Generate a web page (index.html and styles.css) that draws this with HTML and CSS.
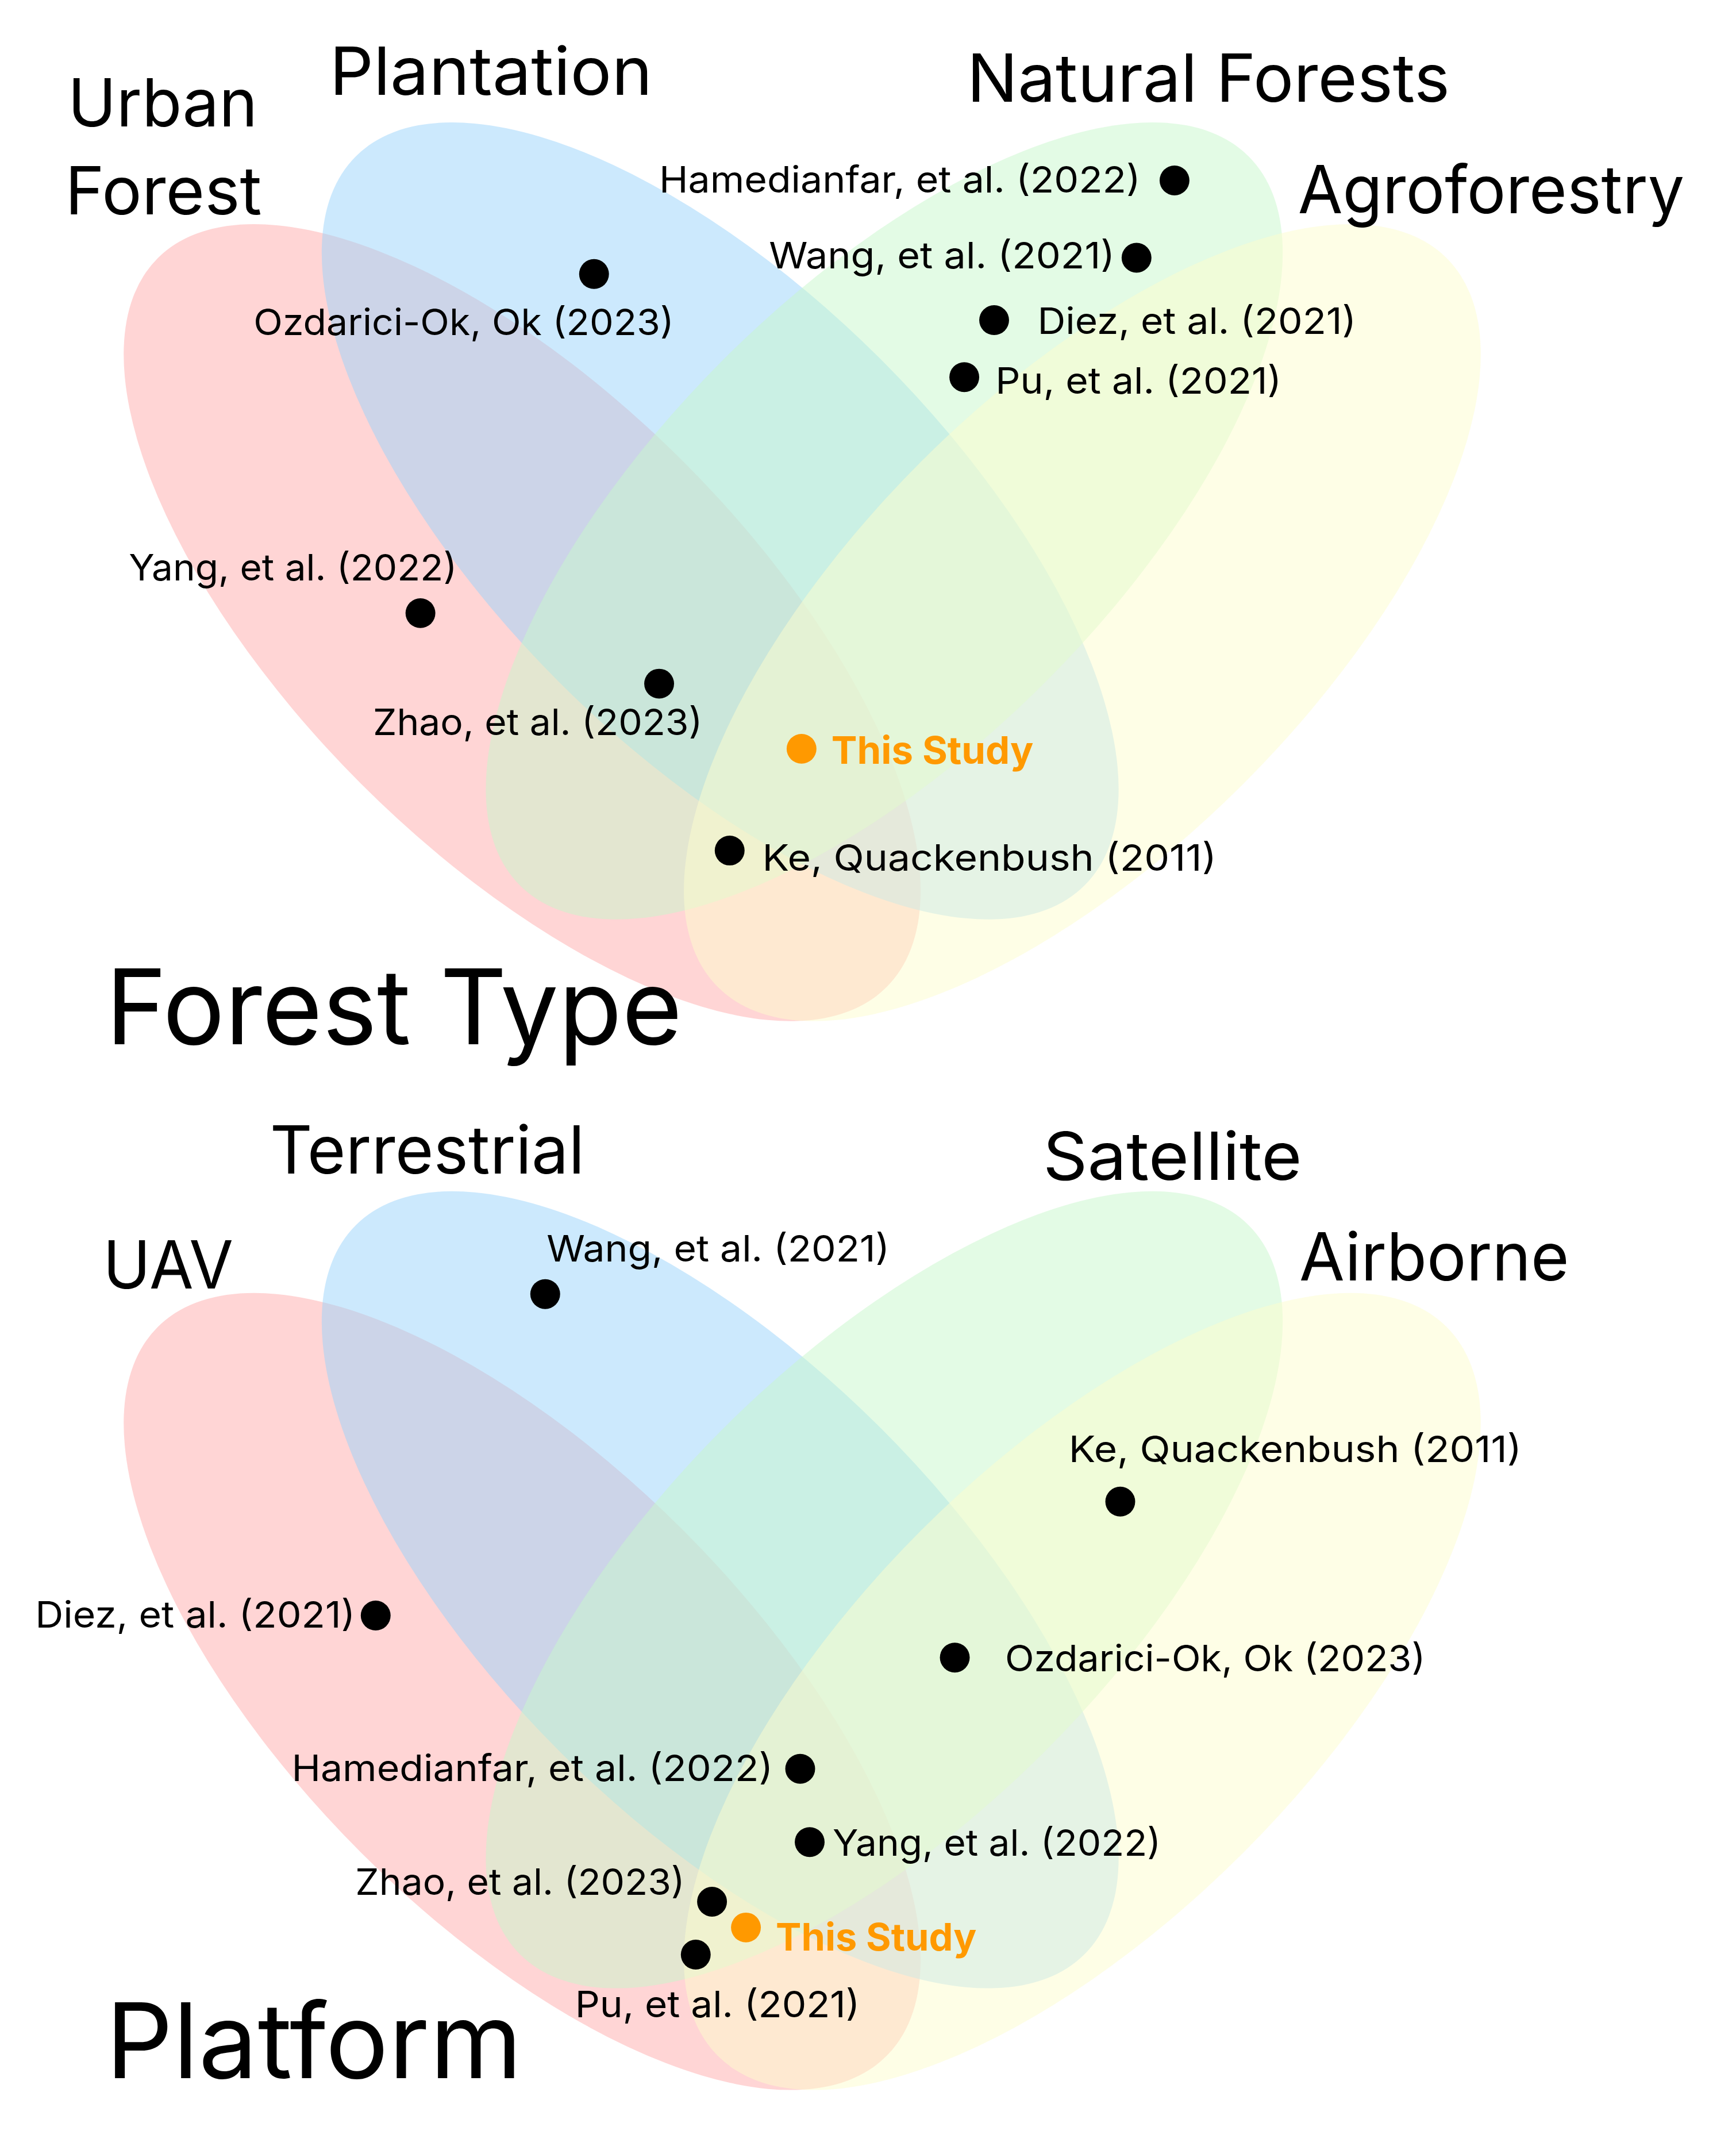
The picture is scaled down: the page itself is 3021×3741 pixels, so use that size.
FILE: index.html
```html
<!DOCTYPE html>
<html lang="en">
<head>
<meta charset="utf-8">
<title>Forest Type and Platform Venn diagrams</title>
<link rel="stylesheet" href="styles.css">
</head>
<body>
<main class="page">
<svg class="venn" viewBox="0 0 1280 1585" width="3021" height="3741" xmlns="http://www.w3.org/2000/svg">
  <!-- Forest Type diagram -->
  <g class="diagram">
    <ellipse class="set set-red" cx="385" cy="459" rx="380" ry="168" transform="rotate(45 385 459)"/>
    <ellipse class="set set-blue" cx="531" cy="384" rx="380" ry="168" transform="rotate(45 531 384)"/>
    <ellipse class="set set-green" cx="652" cy="384" rx="380" ry="168" transform="rotate(-45 652 384)"/>
    <ellipse class="set set-yellow" cx="798" cy="459" rx="380" ry="168" transform="rotate(-45 798 459)"/>

    <text class="set-label" x="50" y="93" textLength="140" lengthAdjust="spacingAndGlyphs">Urban</text>
    <text class="set-label" x="48" y="158" textLength="145" lengthAdjust="spacingAndGlyphs">Forest</text>
    <text class="set-label" x="243" y="70" textLength="238" lengthAdjust="spacingAndGlyphs">Plantation</text>
    <text class="set-label" x="713" y="75" textLength="356" lengthAdjust="spacingAndGlyphs">Natural Forests</text>
    <text class="set-label" x="957" y="157" textLength="285" lengthAdjust="spacingAndGlyphs">Agroforestry</text>

    <circle class="dot" cx="866" cy="133" r="11"/>
    <text class="cite" x="486" y="142" textLength="355" lengthAdjust="spacingAndGlyphs">Hamedianfar, et al. (2022)</text>
    <circle class="dot" cx="838" cy="190" r="11"/>
    <text class="cite" x="567" y="198" textLength="255" lengthAdjust="spacingAndGlyphs">Wang, et al. (2021)</text>
    <circle class="dot" cx="733" cy="236" r="11"/>
    <text class="cite" x="765" y="246" textLength="235" lengthAdjust="spacingAndGlyphs">Diez, et al. (2021)</text>
    <circle class="dot" cx="711" cy="278" r="11"/>
    <text class="cite" x="734" y="290" textLength="211" lengthAdjust="spacingAndGlyphs">Pu, et al. (2021)</text>
    <circle class="dot" cx="438" cy="202" r="11"/>
    <text class="cite" x="187" y="247" textLength="310" lengthAdjust="spacingAndGlyphs">Ozdarici-Ok, Ok (2023)</text>
    <circle class="dot" cx="310" cy="452" r="11"/>
    <text class="cite" x="95" y="428" textLength="242" lengthAdjust="spacingAndGlyphs">Yang, et al. (2022)</text>
    <circle class="dot" cx="486" cy="504" r="11"/>
    <text class="cite" x="275" y="542" textLength="243" lengthAdjust="spacingAndGlyphs">Zhao, et al. (2023)</text>
    <circle class="dot dot-study" cx="591" cy="552" r="11"/>
    <text class="cite cite-study" x="613" y="563" textLength="149" lengthAdjust="spacingAndGlyphs">This Study</text>
    <circle class="dot" cx="538" cy="627" r="11"/>
    <text class="cite" x="562" y="642" textLength="335" lengthAdjust="spacingAndGlyphs">Ke, Quackenbush (2011)</text>

    <text class="title" x="78" y="770" textLength="425" lengthAdjust="spacingAndGlyphs">Forest  Type</text>
  </g>

  <!-- Platform diagram -->
  <g class="diagram">
    <ellipse class="set set-red" cx="385" cy="1247" rx="380" ry="168" transform="rotate(45 385 1247)"/>
    <ellipse class="set set-blue" cx="531" cy="1172" rx="380" ry="168" transform="rotate(45 531 1172)"/>
    <ellipse class="set set-green" cx="652" cy="1172" rx="380" ry="168" transform="rotate(-45 652 1172)"/>
    <ellipse class="set set-yellow" cx="798" cy="1247" rx="380" ry="168" transform="rotate(-45 798 1247)"/>

    <text class="set-label" x="199" y="865" textLength="232" lengthAdjust="spacingAndGlyphs">Terrestrial</text>
    <text class="set-label" x="769" y="870" textLength="191" lengthAdjust="spacingAndGlyphs">Satellite</text>
    <text class="set-label" x="76" y="950" textLength="96" lengthAdjust="spacingAndGlyphs">UAV</text>
    <text class="set-label" x="958" y="944" textLength="199" lengthAdjust="spacingAndGlyphs">Airborne</text>

    <circle class="dot" cx="402" cy="954" r="11"/>
    <text class="cite" x="403" y="930" textLength="253" lengthAdjust="spacingAndGlyphs">Wang, et al. (2021)</text>
    <circle class="dot" cx="826" cy="1107" r="11"/>
    <text class="cite" x="788" y="1078" textLength="334" lengthAdjust="spacingAndGlyphs">Ke, Quackenbush (2011)</text>
    <circle class="dot" cx="277" cy="1191" r="11"/>
    <text class="cite" x="26" y="1200" textLength="236" lengthAdjust="spacingAndGlyphs">Diez, et al. (2021)</text>
    <circle class="dot" cx="704" cy="1222" r="11"/>
    <text class="cite" x="741" y="1232" textLength="310" lengthAdjust="spacingAndGlyphs">Ozdarici-Ok, Ok (2023)</text>
    <circle class="dot" cx="590" cy="1304" r="11"/>
    <text class="cite" x="215" y="1313" textLength="355" lengthAdjust="spacingAndGlyphs">Hamedianfar, et al. (2022)</text>
    <circle class="dot" cx="597" cy="1358" r="11"/>
    <text class="cite" x="614" y="1368" textLength="242" lengthAdjust="spacingAndGlyphs">Yang, et al. (2022)</text>
    <circle class="dot" cx="525" cy="1402" r="11"/>
    <text class="cite" x="262" y="1397" textLength="243" lengthAdjust="spacingAndGlyphs">Zhao, et al. (2023)</text>
    <circle class="dot dot-study" cx="550" cy="1421" r="11"/>
    <text class="cite cite-study" x="572" y="1438" textLength="148" lengthAdjust="spacingAndGlyphs">This Study</text>
    <circle class="dot" cx="513" cy="1441" r="11"/>
    <text class="cite" x="424" y="1487" textLength="210" lengthAdjust="spacingAndGlyphs">Pu, et al. (2021)</text>

    <text class="title" x="78" y="1532" textLength="307" lengthAdjust="spacingAndGlyphs">Platform</text>
  </g>
</svg>
</main>
</body>
</html>
```

FILE: styles.css
```css
html, body {
  margin: 0;
  padding: 0;
  background: #ffffff;
}

.page {
  width: 3021px;
  height: 3741px;
  overflow: hidden;
}

.venn {
  display: block;
  width: 3021px;
  height: 3741px;
}

.set {
  opacity: 0.5;
}

.set-red { fill: #ffabab; }
.set-blue { fill: #99d3fb; }
.set-green { fill: #c7f7cb; }
.set-yellow { fill: #fdfdcd; }

.set-label {
  font-family: Inter, "Liberation Sans", sans-serif;
  font-size: 49px;
  fill: #000000;
}

.title {
  font-family: Inter, "Liberation Sans", sans-serif;
  font-size: 77px;
  fill: #000000;
}

.cite {
  font-family: Inter, "Liberation Sans", sans-serif;
  font-size: 27px;
  fill: #000000;
}

.cite-study {
  font-size: 28px;
  font-weight: 700;
  fill: #ff9900;
}

.dot { fill: #000000; }
.dot-study { fill: #ff9900; }
```
